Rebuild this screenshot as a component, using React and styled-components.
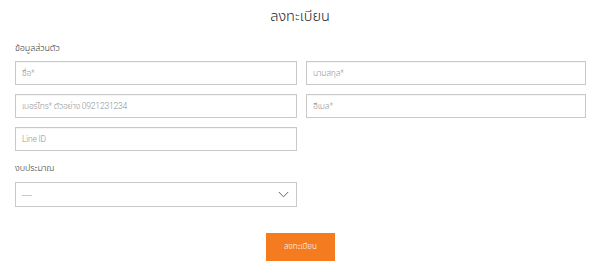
import React from "react";
import styled, { createGlobalStyle } from "styled-components";

const Global = createGlobalStyle`
  html, body { margin: 0; padding: 0; background: #fff; }
  body { font-family: Roboto, "Noto Sans Thai", "Noto Sans", "Liberation Sans", sans-serif; color: #333; }
  * { box-sizing: border-box; }
`;

const Page = styled.div`
  width: 600px;
  padding: 7px 15px 0 15px;
`;

const Title = styled.h1`
  margin: 0;
  text-align: center;
  font-size: 14.5px;
  font-weight: 300;
  line-height: 20px;
  color: #222;
`;

const Section = styled.div`
  margin-top: ${(p) => p.$top || 0}px;
  font-size: 9px;
  font-weight: 300;
  letter-spacing: -0.1px;
  line-height: 12px;
  color: #333;
`;

const Grid = styled.div`
  display: grid;
  grid-template-columns: 282px 280px;
  column-gap: 9px;
  row-gap: 9px;
  margin-top: ${(p) => p.$top || 0}px;
`;

const Input = styled.input`
  height: 24px;
  width: 100%;
  border: 1px solid #c9c9c9;
  box-shadow: inset 0 1px 1px rgba(0,0,0,0.04);
  padding: 0 6px;
  font-family: inherit;
  font-size: 8.5px;
  font-weight: 300;
  letter-spacing: -0.2px;
  color: #333;
  outline: none;
  &::placeholder { color: #939393; }
`;

const SelectBox = styled.div`
  margin-top: ${(p) => p.$top || 0}px;
  width: 282px;
  height: 25px;
  border: 1px solid #c9c9c9;
  display: flex;
  align-items: center;
  justify-content: space-between;
  padding: 0 7px 0 6px;
  font-size: 9px;
  color: #aaa;
`;

const Actions = styled.div`
  display: flex;
  justify-content: center;
  margin-top: 26px;
`;

const Button = styled.button`
  width: 69px;
  height: 28px;
  background: #f47b20;
  border: none;
  color: #fff;
  font-family: inherit;
  font-size: 8px;
  font-weight: 300;
  margin-left: 1px;
  cursor: pointer;
`;

export default function App() {
  return (
    <>
      <Global />
      <Page>
        <Title>ลงทะเบียน</Title>
        <Section $top={15}>ข้อมูลส่วนตัว</Section>
        <Grid $top={7}>
          <Input placeholder="ชื่อ*" />
          <Input placeholder="นามสกุล*" />
          <Input placeholder="เบอร์โทร* ตัวอย่าง 0921231234" />
          <Input placeholder="อีเมล*" />
          <Input placeholder="Line ID" />
        </Grid>
        <Section $top={11}>งบประมาณ</Section>
        <SelectBox $top={8}>
          <span>----</span>
          <svg width="11" height="7" viewBox="0 0 11 7" fill="none">
            <path d="M0.8 1 L5.5 5.8 L10.2 1" stroke="#666" strokeWidth="1" />
          </svg>
        </SelectBox>
        <Actions>
          <Button>ลงทะเบียน</Button>
        </Actions>
      </Page>
    </>
  );
}
